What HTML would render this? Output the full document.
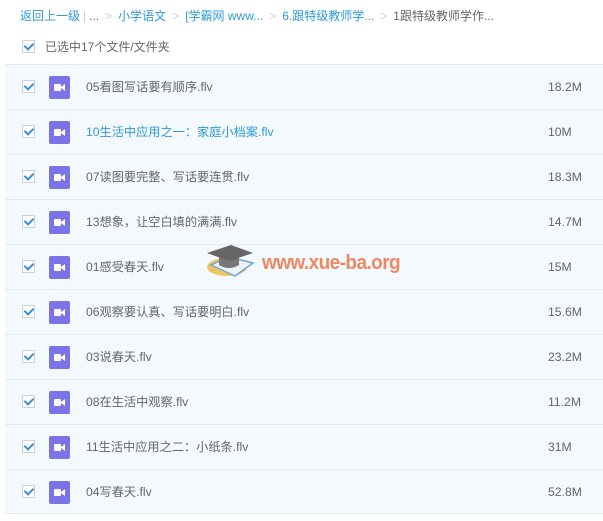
<!DOCTYPE html>
<html><head><meta charset="utf-8"><style>
*{margin:0;padding:0;box-sizing:border-box}
body{width:603px;height:521px;background:#fff;font-family:"Liberation Sans","Noto Sans CJK SC",sans-serif;font-size:12px;color:#666;position:relative;overflow:hidden}
.bc{position:absolute;top:8px;left:20px;white-space:nowrap;color:#2e9ad8;line-height:16px}
.bc .g{color:#c5d0d8;margin:0 6px}
.bc .d{color:#666}
.cb{position:absolute;width:13px;height:13px;border:1px solid #c9d3dc;background:#fff}
.cb:after{content:"";position:absolute;left:3px;top:0px;width:4px;height:7px;border:solid #3b8fd8;border-width:0 2px 2px 0;transform:rotate(45deg)}
.sel{position:absolute;top:39px;left:45px;color:#666;line-height:16px}
.list{position:absolute;top:64px;left:5px;width:598px}
.row{height:45px;background:#f4f9fd;border-top:1px solid #dfeaf5;position:relative}
.row:last-child{border-bottom:1px solid #dfeaf5}
.row .cb{left:17px;top:15px}
.ic{position:absolute;left:44px;top:11px;width:21px;height:23px;background:#7b74e8;border-radius:2px}
.ic:before{content:"";position:absolute;left:5px;top:8px;width:7px;height:7px;background:#fff;border-radius:1px}
.ic:after{content:"";position:absolute;left:12px;top:8px;border-right:4px solid #fff;border-top:3px solid transparent;border-bottom:3px solid transparent;height:1px}
.nm{position:absolute;left:81px;top:14px;line-height:16px;font-size:12.2px}
.sz{position:absolute;left:543px;top:14px;line-height:16px;font-size:12.2px}
.blue{color:#2e9ad8}
.logo{position:absolute;left:262px;top:252px;font:bold 20px "Liberation Sans",sans-serif;color:#ee8860;letter-spacing:-0.6px;transform:scaleX(0.95);transform-origin:left}
</style></head><body>
<div class="bc">返回上一级<span style="color:#ccc;margin:0 3px">|</span><span class="d">...</span><span class="g">&gt;</span>小学语文<span class="g">&gt;</span>[学霸网 www...<span class="g">&gt;</span>6.跟特级教师学...<span class="g">&gt;</span><span class="d">1跟特级教师学作...</span></div>
<div class="cb" style="left:22px;top:40px"></div>
<div class="sel">已选中17个文件/文件夹</div>
<div class="list">
<div class="row"><div class="cb"></div><div class="ic"></div><div class="nm">05看图写话要有顺序.flv</div><div class="sz">18.2M</div></div>
<div class="row"><div class="cb"></div><div class="ic"></div><div class="nm blue">10生活中应用之一：家庭小档案.flv</div><div class="sz">10M</div></div>
<div class="row"><div class="cb"></div><div class="ic"></div><div class="nm">07读图要完整、写话要连贯.flv</div><div class="sz">18.3M</div></div>
<div class="row"><div class="cb"></div><div class="ic"></div><div class="nm">13想象，让空白填的满满.flv</div><div class="sz">14.7M</div></div>
<div class="row"><div class="cb"></div><div class="ic"></div><div class="nm">01感受春天.flv</div><div class="sz">15M</div></div>
<div class="row"><div class="cb"></div><div class="ic"></div><div class="nm">06观察要认真、写话要明白.flv</div><div class="sz">15.6M</div></div>
<div class="row"><div class="cb"></div><div class="ic"></div><div class="nm">03说春天.flv</div><div class="sz">23.2M</div></div>
<div class="row"><div class="cb"></div><div class="ic"></div><div class="nm">08在生活中观察.flv</div><div class="sz">11.2M</div></div>
<div class="row"><div class="cb"></div><div class="ic"></div><div class="nm">11生活中应用之二：小纸条.flv</div><div class="sz">31M</div></div>
<div class="row"><div class="cb"></div><div class="ic"></div><div class="nm">04写春天.flv</div><div class="sz">52.8M</div></div>
</div>
<svg style="position:absolute;left:205px;top:243px" width="52" height="36" viewBox="0 0 52 36">
<ellipse cx="22" cy="24" rx="20" ry="9" fill="#f3c45e"/>
<path d="M6 22 L30 33 L48 20 L24 14 Z" fill="#eef3f6" stroke="#6aa8d8" stroke-width="1.5"/>
<path d="M14 14 L14 22 Q24 28 34 22 L34 14 Z" fill="#777"/>
<path d="M2 10 L26 2 L48 10 L24 18 Z" fill="#666"/>
</svg>
<div class="logo">www.xue-ba.org</div>
</body></html>
